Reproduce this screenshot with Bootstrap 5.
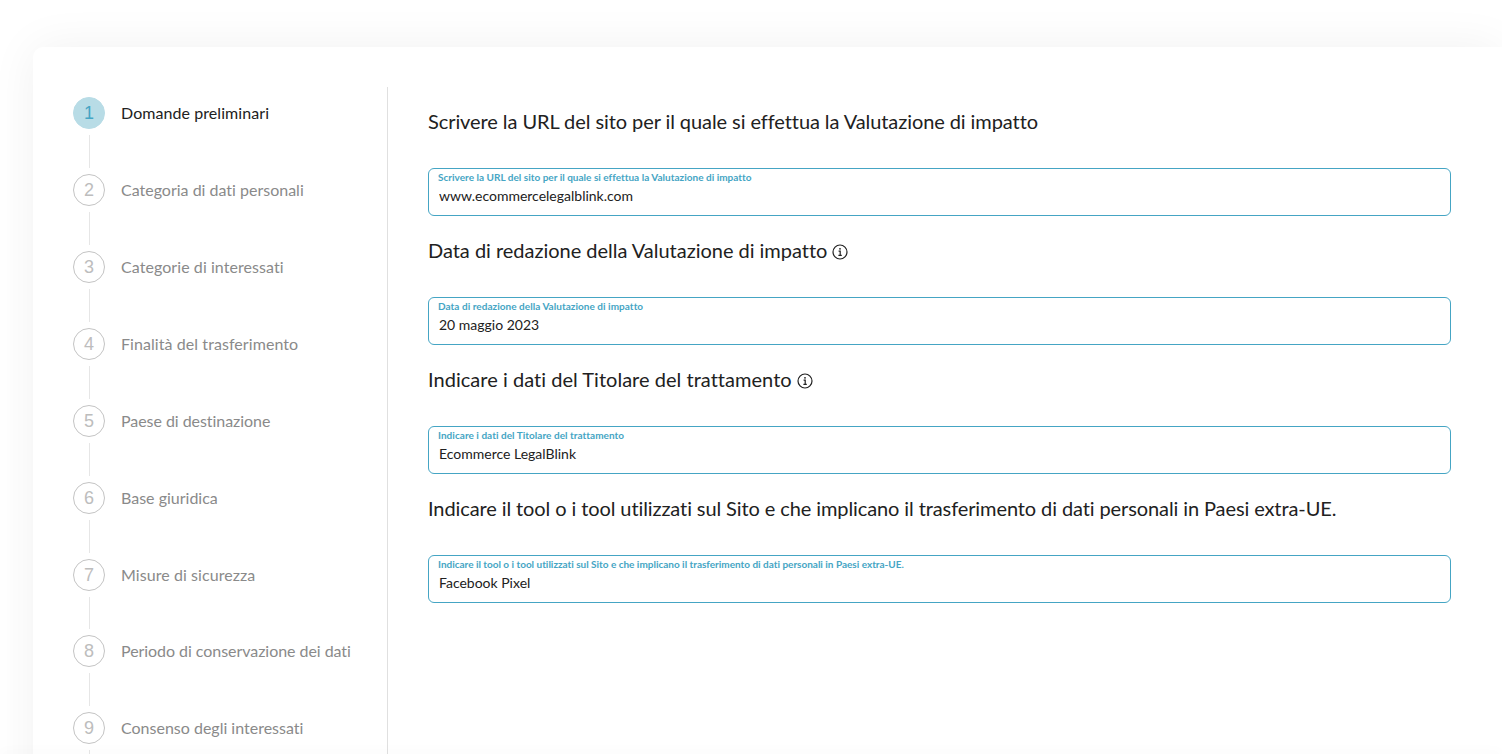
<!DOCTYPE html>
<html lang="it">
<head>
<meta charset="utf-8">
<title>Valutazione di impatto</title>
<link href="https://cdn.jsdelivr.net/npm/bootstrap@5.3.0/dist/css/bootstrap.min.css" rel="stylesheet">
<style>
html, body { height: 100%; overflow: hidden; background: #fff; }
body { font-family: "Lato", sans-serif; color: #212121; font-variant-ligatures: none; }
.page-wrap { padding: 47px 0 0 33px; }
.panel { background: #fff; border-radius: 10px 0 0 0; box-shadow: 0 0 48px rgba(0,0,0,.06); padding: 40px 0 0 40px; height: 900px; }
.side { width: 315px; border-right: 1px solid #e0e0e0; padding-top: 10px; flex: none; }
.main-col { padding: 0 51px 0 40px; flex: 1 1 auto; min-width: 0; }
.step-num { width: 32px; height: 32px; border-radius: 50%; border: 1px solid #c4c4c4; color: #bdbdbd; font-size: 18px; line-height: 1; flex: none; font-family: "Liberation Sans", sans-serif; }
.step-num.on { background: #b8dce6; border-color: #b8dce6; color: #45a5c4; }
.step-text { font-size: 16px; line-height: 24px; color: #8a8a8a; margin-left: 16px; }
.step-text.on { color: #212121; }
.step-text.wide { letter-spacing: .07px; }
.step-text.tight { letter-spacing: -.05px; }
.step-link { width: 1px; height: 33px; background: #e6e6e6; margin: 6px 0 6px 16px; }
.step-link.short { height: 32px; }
.q-title { font-size: 20px; line-height: 30px; font-weight: 400; margin: 19px 0 32px; color: #212121; }
.q-title svg { vertical-align: -1.5px; }
.t-a { letter-spacing: -.08px; }
.t-b { letter-spacing: -.02px; }
.t-c { letter-spacing: .03px; }
.t-d { letter-spacing: -.1px; }
.q-field { height: 48px; border: 1px solid #45a5c4; border-radius: 6px; padding: 2px 10px 0 10px; }
.q-label { font-size: 10px; font-weight: 700; line-height: 12px; color: #45a5c4; margin-left: -1px; display: block; }
.l-a { letter-spacing: .015px; }
.l-b { letter-spacing: .04px; }
.l-d { letter-spacing: -.01px; }
.q-value { display: block; font-size: 14px; line-height: 20px; margin-top: 3px; padding: 0; border: 0; width: 100%; color: #212121; background: transparent; outline: 0; font-family: inherit; }
.foot-shade { position: fixed; left: 0; right: 0; bottom: -4px; height: 4px; box-shadow: 0 0 14px rgba(0,0,0,.05); }
</style>
</head>
<body>
<div class="page-wrap">
  <div class="panel d-flex">
    <nav class="side">
      <div class="d-flex align-items-center"><div class="step-num on d-flex align-items-center justify-content-center">1</div><div class="step-text on wide">Domande preliminari</div></div>
      <div class="step-link"></div>
      <div class="d-flex align-items-center"><div class="step-num d-flex align-items-center justify-content-center">2</div><div class="step-text">Categoria di dati personali</div></div>
      <div class="step-link"></div>
      <div class="d-flex align-items-center"><div class="step-num d-flex align-items-center justify-content-center">3</div><div class="step-text wide">Categorie di interessati</div></div>
      <div class="step-link"></div>
      <div class="d-flex align-items-center"><div class="step-num d-flex align-items-center justify-content-center">4</div><div class="step-text wide">Finalità del trasferimento</div></div>
      <div class="step-link"></div>
      <div class="d-flex align-items-center"><div class="step-num d-flex align-items-center justify-content-center">5</div><div class="step-text tight">Paese di destinazione</div></div>
      <div class="step-link"></div>
      <div class="d-flex align-items-center"><div class="step-num d-flex align-items-center justify-content-center">6</div><div class="step-text">Base giuridica</div></div>
      <div class="step-link"></div>
      <div class="d-flex align-items-center"><div class="step-num d-flex align-items-center justify-content-center">7</div><div class="step-text wide">Misure di sicurezza</div></div>
      <div class="step-link short"></div>
      <div class="d-flex align-items-center"><div class="step-num d-flex align-items-center justify-content-center">8</div><div class="step-text tight">Periodo di conservazione dei dati</div></div>
      <div class="step-link"></div>
      <div class="d-flex align-items-center"><div class="step-num d-flex align-items-center justify-content-center">9</div><div class="step-text">Consenso degli interessati</div></div>
      <div class="step-link"></div>
    </nav>
    <main class="main-col">
      <h2 class="q-title t-a">Scrivere la URL del sito per il quale si effettua la Valutazione di impatto</h2>
      <div class="q-field"><label class="q-label l-a">Scrivere la URL del sito per il quale si effettua la Valutazione di impatto</label><input class="q-value" value="www.ecommercelegalblink.com"></div>
      <h2 class="q-title t-b">Data di redazione della Valutazione di impatto <svg width="16" height="16" viewBox="0 0 16 16" fill="none" stroke="#212121"><circle cx="8" cy="8" r="7" stroke-width="1.2"/><path d="M6.6 7.2H8.2V11.4M6.4 11.4H9.8" stroke-width="1.2"/><circle cx="8" cy="4.8" r=".9" fill="#212121" stroke="none"/></svg></h2>
      <div class="q-field"><label class="q-label l-b">Data di redazione della Valutazione di impatto</label><input class="q-value" value="20 maggio 2023"></div>
      <h2 class="q-title t-c">Indicare i dati del Titolare del trattamento <svg width="16" height="16" viewBox="0 0 16 16" fill="none" stroke="#212121"><circle cx="8" cy="8" r="7" stroke-width="1.2"/><path d="M6.6 7.2H8.2V11.4M6.4 11.4H9.8" stroke-width="1.2"/><circle cx="8" cy="4.8" r=".9" fill="#212121" stroke="none"/></svg></h2>
      <div class="q-field"><label class="q-label l-b">Indicare i dati del Titolare del trattamento</label><input class="q-value" value="Ecommerce LegalBlink"></div>
      <h2 class="q-title t-d">Indicare il tool o i tool utilizzati sul Sito e che implicano il trasferimento di dati personali in Paesi extra-UE.</h2>
      <div class="q-field"><label class="q-label l-d">Indicare il tool o i tool utilizzati sul Sito e che implicano il trasferimento di dati personali in Paesi extra-UE.</label><input class="q-value" value="Facebook Pixel"></div>
    </main>
  </div>
</div>
<div class="foot-shade"></div>
<script src="https://cdn.jsdelivr.net/npm/bootstrap@5.3.0/dist/js/bootstrap.bundle.min.js"></script>
</body>
</html>
